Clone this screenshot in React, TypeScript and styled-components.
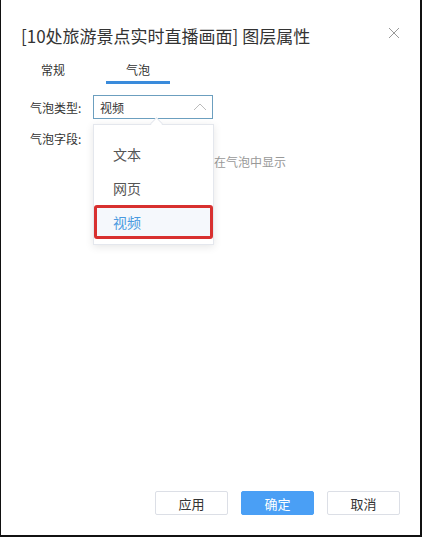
import styled, { createGlobalStyle } from "styled-components";

const GlobalStyle = createGlobalStyle`
  html, body {
    margin: 0;
    padding: 0;
    background: #ffffff;
  }
  body {
    font-family: "Noto Sans CJK SC", "Noto Sans", sans-serif;
    color: #333333;
  }
  * {
    box-sizing: border-box;
  }
`;

const Dialog = styled.div`
  width: 422px;
  height: 537px;
  display: flex;
  flex-direction: column;
  background: #ffffff;
  border-left: 1px solid #111;
  border-right: 2px solid #111;
  border-bottom: 2px solid #111;
  padding: 24px 20px 20px 19px;
`;

const Header = styled.header`
  display: flex;
  justify-content: space-between;
  align-items: flex-start;
`;

const Title = styled.h1`
  margin: 0;
  font-size: 17px;
  line-height: 24px;
  font-weight: 400;
  color: #333;
  padding-left: 1px;
`;

const Close = styled.button`
  border: none;
  background: none;
  padding: 0;
  margin-top: 3px;
  width: 12px;
  height: 12px;
  cursor: pointer;
  display: flex;
`;

const Tabs = styled.div`
  display: flex;
  gap: 21px;
  margin-top: 11px;
  padding-left: 1px;
`;

const Tab = styled.div<{ active?: boolean }>`
  width: 64px;
  height: 25px;
  line-height: 22px;
  text-align: center;
  font-size: 12px;
  color: #333;
  border-bottom: 3px solid ${(p) => (p.active ? "#3a8bdb" : "transparent")};
`;

const Form = styled.div`
  margin-top: 11px;
  padding-left: 10px;
  display: flex;
  flex-direction: column;
  gap: 7px;
`;

const Row = styled.div`
  display: flex;
  align-items: center;
  height: 24px;
`;

const Label = styled.label`
  width: 63px;
  font-size: 12px;
  color: #333;
`;

const Field = styled.div`
  position: relative;
  width: 120px;
  height: 24px;
`;

const SelectBox = styled.div<{ focused?: boolean }>`
  height: 24px;
  border: 1px solid ${(p) => (p.focused ? "#6c9fbf" : "#dcdfe6")};
  display: flex;
  align-items: center;
  justify-content: space-between;
  padding: 0 5px 0 6px;
  font-size: 12px;
  color: #333;
  background: #fff;
`;

const Hint = styled.div`
  margin: -2px 0 0 184px;
  font-size: 12px;
  line-height: 14px;
  color: #999;
`;

const Dropdown = styled.ul`
  position: absolute;
  top: calc(100% + 5px);
  left: 0;
  width: 121px;
  margin: 0;
  padding: 12px 0 5px;
  list-style: none;
  background: #fff;
  border: 1px solid #e4e7ed;
  box-shadow: 0 2px 8px rgba(0, 0, 0, 0.1);
  z-index: 2;

  &::before {
    content: "";
    position: absolute;
    top: -6px;
    left: 58px;
    width: 8px;
    height: 8px;
    background: #fff;
    border-left: 1px solid #e4e7ed;
    border-top: 1px solid #e4e7ed;
    transform: rotate(45deg);
  }
`;

const Option = styled.li<{ selected?: boolean }>`
  height: 34px;
  display: flex;
  align-items: center;
  padding-left: 16px;
  font-size: 14px;
  color: ${(p) => (p.selected ? "#4a9ae0" : "#555")};
  border: 3px solid ${(p) => (p.selected ? "#d8302f" : "transparent")};
  border-radius: 3px;
  background: ${(p) => (p.selected ? "#f5f8fc" : "transparent")};
`;

const Footer = styled.footer`
  margin-top: auto;
  display: flex;
  justify-content: flex-end;
  gap: 13px;
`;

const Button = styled.button<{ primary?: boolean }>`
  width: 73px;
  height: 24px;
  border-radius: 2px;
  font-family: inherit;
  font-size: 13px;
  border: 1px solid ${(p) => (p.primary ? "#4a9ff5" : "#dcdfe6")};
  background: ${(p) => (p.primary ? "#4a9ff5" : "#fff")};
  color: ${(p) => (p.primary ? "#fff" : "#333")};
  padding: 0;
`;

function ChevronUp() {
  return (
    <svg width="14" height="8" viewBox="0 0 14 8">
      <path d="M1 7 L7 1 L13 7" fill="none" stroke="#bbb" strokeWidth="1" />
    </svg>
  );
}

export default function App() {
  return (
    <>
      <GlobalStyle />
      <Dialog>
        <Header>
          <Title>[10处旅游景点实时直播画面] 图层属性</Title>
          <Close aria-label="关闭">
            <svg width="12" height="12" viewBox="0 0 12 12">
              <path d="M1 1 L11 11 M11 1 L1 11" stroke="#999" strokeWidth="1" />
            </svg>
          </Close>
        </Header>

        <Tabs>
          <Tab>常规</Tab>
          <Tab active>气泡</Tab>
        </Tabs>

        <Form>
          <Row>
            <Label>气泡类型:</Label>
            <Field>
              <SelectBox focused>
                <span>视频</span>
                <ChevronUp />
              </SelectBox>
              <Dropdown>
                <Option>文本</Option>
                <Option>网页</Option>
                <Option selected>视频</Option>
              </Dropdown>
            </Field>
          </Row>
          <Row>
            <Label>气泡字段:</Label>
            <Field>
              <SelectBox />
            </Field>
          </Row>
          <Hint>在气泡中显示</Hint>
        </Form>

        <Footer>
          <Button>应用</Button>
          <Button primary>确定</Button>
          <Button>取消</Button>
        </Footer>
      </Dialog>
    </>
  );
}
